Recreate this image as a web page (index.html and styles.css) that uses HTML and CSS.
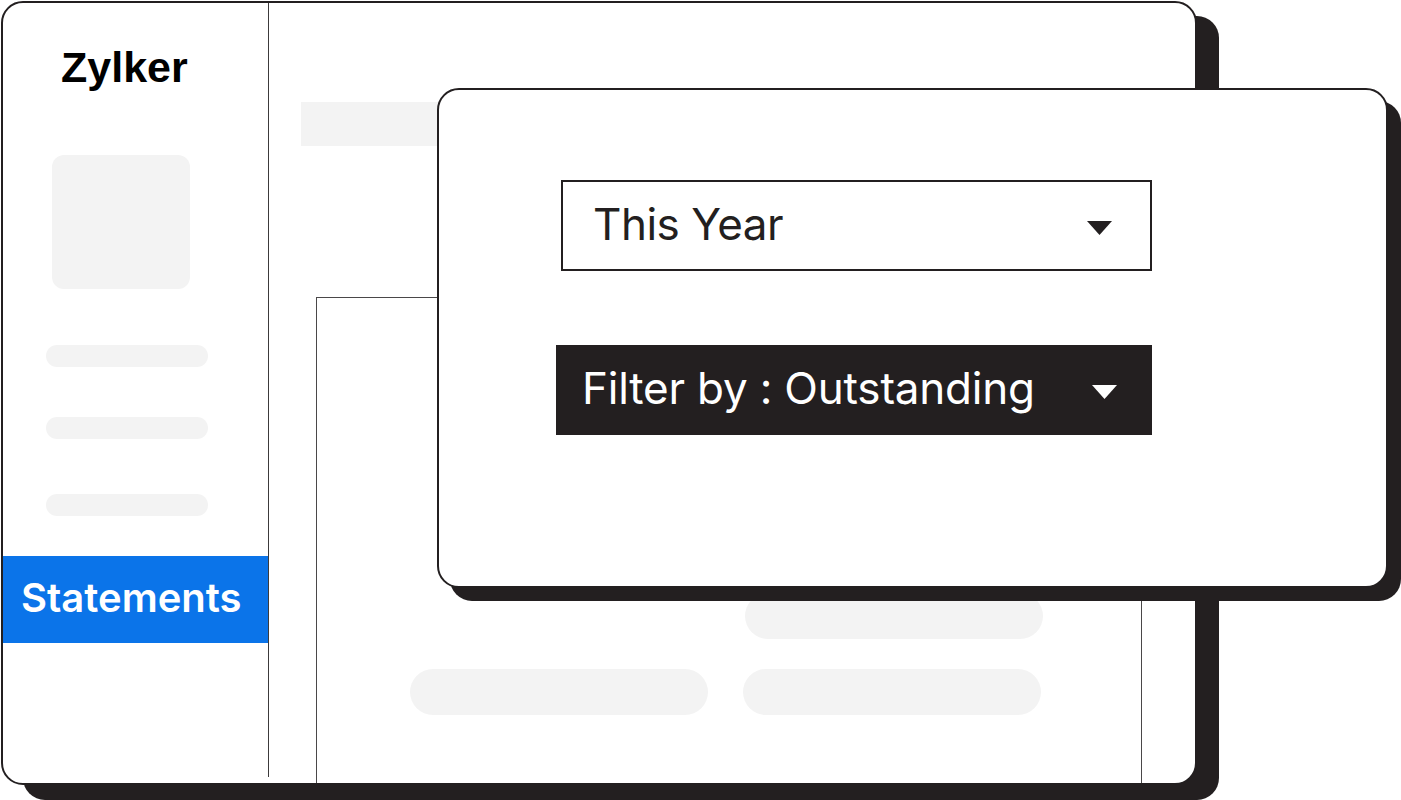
FILE: index.html
```html
<!DOCTYPE html>
<html lang="en">
<head>
<meta charset="utf-8">
<title>Zylker Statements</title>
<link rel="stylesheet" href="styles.css">
</head>
<body>
<div class="stage">
  <div class="window">
    <aside class="sidebar">
      <div class="logo">Zylker</div>
      <div class="avatar"></div>
      <div class="nav-pill nav-pill-1"></div>
      <div class="nav-pill nav-pill-2"></div>
      <div class="nav-pill nav-pill-3"></div>
      <div class="nav-active">Statements</div>
    </aside>
    <main class="content">
      <div class="title-bar"></div>
      <div class="panel">
        <div class="pill-row pill-row-top">
          <div class="line-pill"></div>
        </div>
        <div class="pill-row pill-row-bottom">
          <div class="line-pill"></div>
          <div class="line-pill"></div>
        </div>
      </div>
    </main>
  </div>

  <div class="popup">
    <div class="select select-light">
      <span class="select-label">This Year</span>
      <svg class="caret" width="25" height="14" viewBox="0 0 25 14"><polygon points="0,0 25,0 12.5,14" fill="#231f20"/></svg>
    </div>
    <div class="select select-dark">
      <span class="select-label">Filter by : Outstanding</span>
      <svg class="caret" width="25" height="14" viewBox="0 0 25 14"><polygon points="0,0 25,0 12.5,14" fill="#ffffff"/></svg>
    </div>
  </div>
</div>
</body>
</html>
```

FILE: styles.css
```css
* {
  box-sizing: border-box;
}

html, body {
  margin: 0;
  padding: 0;
  background: #ffffff;
  overflow: hidden;
}

body {
  width: 1401px;
  height: 800px;
  font-family: "Inter", "Noto Sans", sans-serif;
}

.stage {
  position: relative;
  width: 1401px;
  height: 800px;
  padding: 1px 0 0 1px;
}

.window {
  width: 1196px;
  height: 784px;
  border: 2px solid #231f20;
  border-radius: 22px;
  background: #ffffff;
  box-shadow: 22px 15px 0 0 #231f20;
  display: flex;
  align-items: flex-start;
  overflow: hidden;
}

/* Sidebar */
.sidebar {
  width: 266px;
  height: 774px;
  flex: none;
  border-right: 1px solid #3c3a3b;
  display: flex;
  flex-direction: column;
  align-items: flex-start;
}

.logo {
  margin-top: 40px;
  padding-left: 58px;
  font-family: "Liberation Sans", Arial, sans-serif;
  font-weight: 700;
  font-size: 43px;
  line-height: 48px;
  color: #000000;
}

.avatar {
  margin-top: 64px;
  margin-left: 49px;
  width: 138px;
  height: 134px;
  border-radius: 12px;
  background: #f3f3f3;
}

.nav-pill {
  margin-left: 43px;
  width: 162px;
  height: 22px;
  border-radius: 11px;
  background: #f3f3f3;
}

.nav-pill-1 { margin-top: 56px; }
.nav-pill-2 { margin-top: 50px; }
.nav-pill-3 { margin-top: 55px; }

.nav-active {
  margin-top: 40px;
  width: 100%;
  height: 87px;
  background: #0b74e9;
  color: #ffffff;
  font-family: "Inter", sans-serif;
  font-weight: 600;
  font-size: 40px;
  display: flex;
  align-items: center;
  padding: 0 0 4px 18px;
}

/* Main content */
.content {
  flex: 1;
  height: 780px;
  display: flex;
  flex-direction: column;
  align-items: flex-start;
}

.title-bar {
  margin-top: 99px;
  margin-left: 32px;
  width: 420px;
  height: 44px;
  background: #f3f3f3;
}

.panel {
  margin-top: 151px;
  margin-left: 47px;
  width: 826px;
  flex: 1;
  border: 1px solid #4a4849;
  border-bottom: none;
  padding-top: 295px;
  display: flex;
  flex-direction: column;
}

.pill-row {
  display: flex;
  gap: 35px;
}

.pill-row-top {
  padding-left: 428px;
}

.pill-row-bottom {
  margin-top: 30px;
  padding-left: 93px;
}

.line-pill {
  width: 298px;
  height: 46px;
  border-radius: 23px;
  background: #f3f3f3;
}

/* Popup overlay */
.popup {
  position: absolute;
  left: 437px;
  top: 88px;
  width: 951px;
  height: 500px;
  border: 2px solid #231f20;
  border-radius: 22px;
  background: #ffffff;
  box-shadow: 13px 13px 0 0 #231f20;
  padding-top: 90px;
  display: flex;
  flex-direction: column;
  align-items: flex-start;
}

.select {
  display: flex;
  align-items: center;
  justify-content: space-between;
  font-family: "Inter", sans-serif;
  font-size: 44px;
  font-weight: 400;
}

.select-light {
  margin-left: 122px;
  width: 591px;
  height: 91px;
  border: 2px solid #231f20;
  color: #231f20;
  padding: 0 38px 3px 30px;
  letter-spacing: -0.5px;
}

.select-dark {
  margin-top: 74px;
  margin-left: 117px;
  width: 596px;
  height: 90px;
  background: #231f20;
  color: #ffffff;
  padding: 0 35px 3px 26px;
  letter-spacing: -0.2px;
}

.select-label {
  line-height: 1.2;
}

.caret {
  display: block;
  margin-top: 7px;
}
```
